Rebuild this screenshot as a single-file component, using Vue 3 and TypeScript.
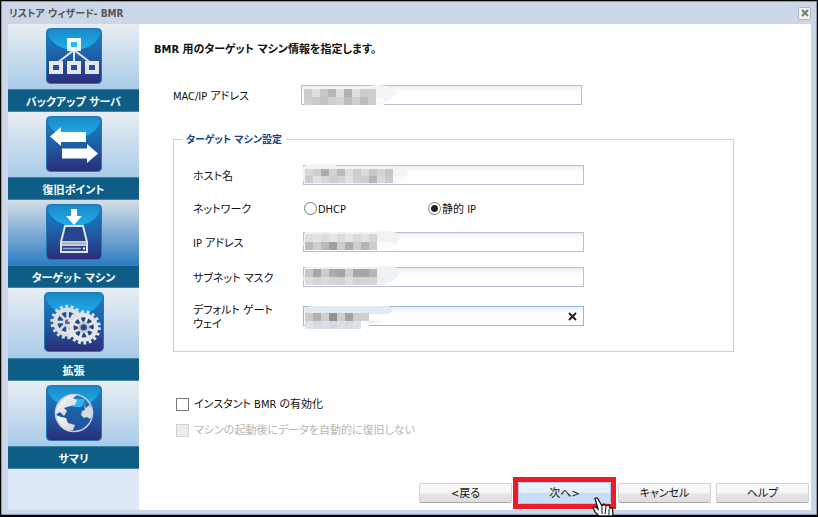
<script setup lang="ts">
import { ref } from 'vue'

type IconName = 'server' | 'arrows' | 'disk' | 'gears' | 'globe'

interface Step {
  label: string
  icon: IconName
  current?: boolean
  large?: boolean
}

interface TextField {
  id: string
  label: string
  mask: string[][]
}

const steps: Step[] = [
  { label: 'バックアップ サーバ', icon: 'server' },
  { label: '復旧ポイント', icon: 'arrows' },
  { label: 'ターゲット マシン', icon: 'disk', current: true },
  { label: '拡張', icon: 'gears', large: true },
  { label: 'サマリ', icon: 'globe' },
]

const macMask = [
  ['#cbcbcb', '#dedede', '#c6c6c6', '#b5b5b5', '#dedfdf', '#b0b0b0', '#dedede', '#cbcbcb', '#cfcfcf', '#f4f4f6'],
  ['#d0d0d0', '#cacaca', '#c4c4c4', '#cfcfcf', '#d4d4d4', '#bcbcbc', '#cecece', '#bcbcbc', '#cecece', '#fafafa'],
]
const hostMask = [
  ['#d5d7d6', '#cecece', '#adadad', '#d2d2d2', '#bababa', '#dcdcdc', '#cbcbcb', '#dadada', '#c8c8c8', '#d4d4d4', '#c5c5c5', '#f3f4f7'],
  ['#cccccc', '#e0e2e1', '#d5d7d7', '#cecece', '#d5d5d5', '#e2e4e4', '#d2d2d2', '#cfcfcf', '#b5b5b5', '#dadada', '#cacaca', '#fafafb'],
]
const fields: TextField[] = [
  {
    id: 'ip',
    label: 'IP アドレス',
    mask: [
      ['#dde0df', '#e2e5e4', '#dbdede', '#e4e6e6', '#d9dcdc', '#e5e5e5', '#d9dada', '#e2e2e2', '#d5d5d5', '#eff2f4', '#f1f4f5'],
      ['#bababa', '#cfcfcf', '#b9b9b9', '#a0a0a0', '#cdcdcd', '#adadad', '#cccccc', '#b5b5b5', '#cccccc', '#fcfcfc', '#fcfcfc'],
    ],
  },
  {
    id: 'subnet',
    label: 'サブネット マスク',
    mask: [
      ['#c8c8c8', '#a8a8a8', '#cdcdcd', '#adadad', '#a4a4a4', '#d0d0d0', '#a8a8a8', '#a6a6a6', '#b6b6b6', '#f3f3f3'],
      ['#dcdcdc', '#d5d5d5', '#dcdcdc', '#d6d6d6', '#d2d2d2', '#dedede', '#d3d3d3', '#d5d5d5', '#d6d6d6', '#eeeeee'],
    ],
  },
]
const gatewayMask = [
  ['#c9cbcc', '#b1b1b1', '#d0d0d0', '#929292', '#cecece', '#a3a3a3', '#cdcdcd', '#cfcfcf'],
  ['#dce2e8', '#d5dde4', '#d8dfe6', '#d2dae2', '#d9e0e6', '#d5dce3', '#dae1e8', '#ffffff'],
]

const spokes = [0, 45, 90, 135]
const network = ref('static')
const instantBmr = ref(false)
</script>

<template>
  <div class="window">
    <header class="titlebar">
      <span>リストア ウィザード- BMR</span>
      <button class="close" type="button" aria-label="閉じる">
        <svg viewBox="0 0 8 8" width="8" height="8"><path d="M1 1l6 6M7 1L1 7" stroke="#777" stroke-width="2" /></svg>
      </button>
    </header>

    <div class="body">
      <nav class="steps">
        <div v-for="step in steps" :key="step.icon" class="step" :class="{ current: step.current, large: step.large }">
          <div class="picture">
            <svg class="icon" viewBox="0 0 56 56">
              <defs>
                <linearGradient :id="step.icon + '-bg'" x1="0" y1="0" x2="0" y2="1">
                  <stop offset="0" stop-color="#1a86c8" />
                  <stop offset="0.5" stop-color="#1c5fa8" />
                  <stop offset="1" stop-color="#2c2d78" />
                </linearGradient>
                <linearGradient :id="step.icon + '-shine'" x1="0" y1="0" x2="0" y2="1">
                  <stop offset="0" stop-color="#1b8bcb" />
                  <stop offset="1" stop-color="#1fb0ea" />
                </linearGradient>
                <linearGradient :id="step.icon + '-metal'" x1="0" y1="0" x2="1" y2="1">
                  <stop offset="0" stop-color="#ffffff" />
                  <stop offset="1" stop-color="#cfcfd3" />
                </linearGradient>
              </defs>
              <rect x="0.5" y="0.5" width="55" height="55" rx="4" :fill="`url(#${step.icon}-bg)`" stroke="#2576b4" />
              <path d="M2 6Q2 2 6 2H50Q54 2 54 6C51 15 41 22 28 22S5 15 2 6Z" :fill="`url(#${step.icon}-shine)`" />

              <g v-if="step.icon === 'server'">
                <path d="M28 22L11 35M28 22V35M28 22L45 35" stroke="#e2e6ee" stroke-width="2" />
                <g fill="#26509a" stroke="#e6e6ea" stroke-width="4">
                  <rect x="23" y="12" width="10" height="9" fill="#25bdf0" stroke="#f2fbff" />
                  <rect x="5" y="35" width="10" height="9" />
                  <rect x="23" y="35" width="10" height="9" />
                  <rect x="41" y="35" width="10" height="9" />
                </g>
              </g>

              <g v-else-if="step.icon === 'arrows'" fill="#fff">
                <path d="M4 20.500L15 11V16H40V26H15V30Z" />
                <path d="M52 37.500L41 28V32.500H16V42.500H41V47Z" />
              </g>

              <g v-else-if="step.icon === 'disk'">
                <path d="M25 5H31V12H36L28 21L20 12H25Z" fill="#fff" />
                <path d="M19 22H37L41 38V48H15V38Z" fill="#264690" stroke="#e2e4ea" stroke-width="2" />
                <path d="M16 37H40V42H16Z" fill="#c9cbd5" />
                <path d="M16 39.500H40" stroke="#9aa2bf" />
                <path d="M17 44.500H35" stroke="#a5aac6" stroke-width="1.500" />
                <path d="M37 44.500H39" stroke="#fff" stroke-width="2" />
              </g>

              <g v-else-if="step.icon === 'gears'">
                <g transform="translate(22 28)" fill="none" stroke="#dcdde1">
                  <circle r="14.500" stroke-width="3" stroke-dasharray="2.6 2.46" />
                  <circle r="11.500" stroke-width="4" fill="#204f99" />
                  <path v-for="angle in spokes" :key="angle" d="M-10 0H10" stroke-width="2.500" :transform="`rotate(${angle})`" />
                  <circle r="3.500" stroke-width="2" fill="#526aa5" />
                </g>
                <g transform="translate(37 33)" fill="none" stroke="#e6e6e8">
                  <circle r="14.500" stroke-width="3" stroke-dasharray="2.6 2.46" />
                  <circle r="11.500" stroke-width="4" fill="#244489" />
                  <path v-for="angle in spokes" :key="angle" d="M-10 0H10" stroke-width="2.500" :transform="`rotate(${angle + 20})`" />
                  <circle r="4" stroke="#c6c8d0" stroke-width="3" fill="#244489" />
                  <circle r="2.500" stroke="#385391" stroke-width="1" />
                </g>
              </g>

              <g v-else>
                <circle cx="28" cy="28" r="18.500" fill="#1d60aa" fill-opacity="0.55" stroke="#c1cad9" stroke-width="1.600" />
                <path d="M30 14H38V18L35 22H27Z" fill="#2cb7f3" />
                <path d="M24 10Q14 13 10 25L9 30L14 27L18 31L21 26L18 23L24 21L29 20L31 15L27 13L31 10Z" :fill="`url(#${step.icon}-metal)`" />
                <path d="M10 30L15 32L20 33L22 38L29 40L27 45L22 46Q12 41 10 30Z" :fill="`url(#${step.icon}-metal)`" />
                <path d="M38 19L40 23L43 20L46 24L47 29L44 34L41 32L38 33L35 30L36 26L39 25Z" fill="#d5d9e2" />
              </g>
            </svg>
          </div>
          <div class="caption">{{ step.label }}</div>
        </div>
      </nav>

      <form class="content" @submit.prevent>
        <h1>BMR 用のターゲット マシン情報を指定します。</h1>

        <div class="row machine">
          <label for="mac">MAC/IP アドレス</label>
          <div class="field">
            <input id="mac" type="text" />
            <svg class="mask" viewBox="0 0 108 24">
              <path d="M1 3Q30 3 64 3Q78 -1 88 3L97 9L88 17L70 21H6Z" fill="#f3f5f8" />
              <g v-for="(tiles, line) in macMask" :key="line">
                <rect v-for="(tone, i) in tiles" :key="i" :x="3 + i * 8" :y="5 + line * 8" width="8" height="8" :fill="tone" />
              </g>
            </svg>
          </div>
        </div>

        <fieldset>
          <legend>ターゲット マシン設定</legend>

          <div class="row">
            <label for="host">ホスト名</label>
            <div class="field">
              <input id="host" type="text" />
              <svg class="mask" viewBox="0 0 108 24">
                <path d="M0 3L6 0H30L34 2H92Q105 5 105 10L96 18L72 20H5L0 17Z" fill="#f1f4f7" />
                <g v-for="(tiles, line) in hostMask" :key="line">
                  <rect v-for="(tone, i) in tiles" :key="i" :x="2 + i * 8" :y="5 + line * 7" width="8" height="7" :fill="tone" />
                </g>
              </svg>
            </div>
          </div>

          <div class="row">
            <span id="network-label" class="name">ネットワーク</span>
            <div class="choices" role="radiogroup" aria-labelledby="network-label">
              <label class="choice"><input v-model="network" type="radio" name="network" value="dhcp" /><span>DHCP</span></label>
              <label class="choice"><input v-model="network" type="radio" name="network" value="static" /><span>静的 IP</span></label>
            </div>
          </div>

          <div v-for="field in fields" :key="field.id" class="row">
            <label :for="field.id">{{ field.label }}</label>
            <div class="field">
              <input :id="field.id" type="text" />
              <svg class="mask" viewBox="0 0 108 24">
                <path d="M2 1H72L82 0L92 1L97 8L90 15L76 19H6L0 14Z" fill="#eff2f5" />
                <g v-for="(tiles, line) in field.mask" :key="line">
                  <rect v-for="(tone, i) in tiles" :key="i" :x="2 + i * 8" :y="3 + line * 8" width="8" height="8" :fill="tone" />
                </g>
              </svg>
            </div>
          </div>

          <div class="row tall">
            <label for="gateway">デフォルト ゲート<br />ウェイ</label>
            <div class="field active">
              <input id="gateway" type="text" />
              <svg class="mask" viewBox="0 0 108 24">
                <path d="M2 4Q4 1 8 1H86L90 4L87 9L84 16L66 18L60 23H8Q3 23 2 19Z" fill="#e1e9f1" />
                <path d="M66 9H90L84 16H66Z" fill="#fff" />
                <g v-for="(tiles, line) in gatewayMask" :key="line">
                  <rect v-for="(tone, i) in tiles" :key="i" :x="2 + i * 8" :y="8 + line * 8" width="8" height="8" :fill="tone" />
                </g>
              </svg>
              <button class="clear" type="button" aria-label="クリア">
                <svg viewBox="0 0 9 9" width="9" height="9"><path d="M1 1l7 7M8 1L1 8" stroke="#222" stroke-width="2" /></svg>
              </button>
            </div>
          </div>
        </fieldset>

        <div class="options">
          <label class="option"><input v-model="instantBmr" type="checkbox" /><span>インスタント BMR の有効化</span></label>
          <label class="option off"><input type="checkbox" disabled /><span>マシンの起動後にデータを自動的に復旧しない</span></label>
        </div>

        <footer class="actions">
          <button type="button">&lt;戻る</button>
          <div class="highlight">
            <button class="next" type="submit">次へ&gt;</button>
            <svg class="pointer" viewBox="0 0 22 19" width="22" height="19">
              <path d="M3 1.500Q4.500 0 6 2L10 9L12 7L14 9L17 8L18 11L20.500 11L21 19H7L3 15L1 10.500Q3 9 5 11L6 12Z" fill="#fff" stroke="#111" stroke-width="1.300" />
              <path d="M10 10V17M14 10L13 17M17 12V18" stroke="#111" />
            </svg>
          </div>
          <button type="button">キャンセル</button>
          <button type="button">ヘルプ</button>
        </footer>
      </form>
    </div>
  </div>
</template>

<style>
body {
  margin: 0;
  background: #000;
}
</style>

<style scoped>
* {
  box-sizing: border-box;
}

.window {
  display: flex;
  flex-direction: column;
  min-height: 100vh;
  padding: 1px 6px 5px 7px;
  border: 1px solid #000;
  border-bottom-width: 2px;
  background: #cbd7e7;
  box-shadow: inset 0 0 0 1px #8798b5;
  color: #111;
  font-family: "DejaVu Sans Condensed", "Noto Sans CJK JP", sans-serif;
  font-size: 11px;
  font-feature-settings: "palt";
  line-height: 14px;
}

button,
input {
  font: inherit;
  font-feature-settings: inherit;
  color: inherit;
}

.titlebar {
  display: flex;
  align-items: center;
  justify-content: space-between;
  height: 22px;
  padding-left: 1px;
  color: #555;
  font-size: 10px;
  font-weight: bold;
}

.titlebar span {
  padding-top: 2px;
}

.close {
  display: flex;
  align-items: center;
  justify-content: center;
  width: 13px;
  height: 13px;
  padding: 0;
  border: 1px solid #b5b5b8;
  border-radius: 2px;
  background: #f1f1f1;
}

.body {
  display: flex;
  flex: 1;
}

.steps {
  flex: 0 0 131px;
  background: #dfe8f6;
}

.picture {
  display: flex;
  justify-content: center;
  height: 65px;
  padding-top: 4px;
  background: linear-gradient(#e9eef3, #a9cbe9);
}

.current .picture {
  background: linear-gradient(#d5dee7, #2d7cc2);
}

.large .picture {
  height: 70px;
}

.icon {
  width: 56px;
  height: 56px;
}

.large .icon {
  width: 60px;
  height: 60px;
}

.caption {
  height: 23px;
  padding-top: 2px;
  border: solid #3f83a6;
  border-width: 1px 0;
  background: #0d5d86;
  color: #fff;
  font-weight: bold;
  line-height: 22px;
  text-align: center;
}

.content {
  display: flex;
  flex: 1;
  flex-direction: column;
  min-width: 0;
  padding: 18px 2px 1px 34px;
  background: #fff;
}

h1 {
  margin: 0 0 27px -19px;
  font-size: 11px;
  line-height: 16px;
}

.row {
  display: flex;
  align-items: center;
}

.row > label,
.name {
  flex: 0 0 110px;
  padding-top: 3px;
}

.machine > label {
  flex-basis: 128px;
}

.field {
  position: relative;
  flex: 0 1 281px;
}

.field input {
  display: block;
  width: 100%;
  height: 20px;
  padding: 0 4px;
  border: 1px solid #b9bfd0;
  border-radius: 0;
  outline: 0;
  background: linear-gradient(#eceeee, #fff 6px);
}

.field.active input {
  padding-right: 22px;
  border-color: #8fb9e3;
}

.mask {
  position: absolute;
  top: -1px;
  left: 0;
  width: 108px;
  height: 24px;
  pointer-events: none;
}

.clear {
  position: absolute;
  top: 0;
  right: 2px;
  display: flex;
  align-items: center;
  justify-content: center;
  width: 20px;
  height: 20px;
  padding: 0;
  border: 0;
  background: none;
}

fieldset {
  display: flex;
  flex-direction: column;
  gap: 15px;
  min-width: 0;
  margin: 26px 75px 44px 0;
  padding: 18px 19px 21px;
  border: 1px solid #ccd0dd;
}

legend {
  height: 16px;
  margin-left: -11px;
  padding: 2px 4px 0;
  color: #15428b;
  font-size: 10px;
  font-weight: bold;
}

.choices {
  display: flex;
}

.choice {
  display: flex;
  align-items: center;
  width: 124px;
  height: 17px;
}

.choice span,
.option span {
  padding-top: 2px;
}

.choice input {
  flex: none;
  width: 13px;
  height: 13px;
  margin: 0 1px;
  border: 1px solid #777;
  border-radius: 50%;
  appearance: none;
  background: #fff;
}

.choice input:checked {
  background: radial-gradient(circle, #222 3px, #fff 4px);
}

.tall {
  height: 28px;
}

.options {
  display: flex;
  flex-direction: column;
  gap: 10px;
  padding-left: 3px;
}

.option {
  display: flex;
  align-items: center;
  gap: 5px;
  height: 16px;
}

.option input {
  flex: none;
  width: 13px;
  height: 13px;
  margin: 0;
  border: 1px solid #777;
  appearance: none;
  background: #fff;
}

.option.off {
  color: #b5b5b5;
}

.option.off input {
  border-color: #d2d2d2;
  background: #ececec;
}

.actions {
  display: flex;
  align-items: center;
  justify-content: flex-end;
  margin-top: auto;
}

.actions button {
  width: 93px;
  height: 20px;
  padding: 2px 0 0;
  border: 1px solid #d2d2d4;
  border-bottom-color: #aaa;
  border-radius: 2px;
  background: linear-gradient(#f8f8f8 45%, #e6e6e8 55%, #dedee0);
}

.actions > button + button {
  margin-left: 5px;
}

.highlight {
  position: relative;
  margin: 0 2px 0 1px;
  border: 5px solid #ed1c24;
}

.highlight .next {
  display: block;
  height: 22px;
  border-color: #a9c5e8;
  background: linear-gradient(#e7f1fc 45%, #c6dcf5 55%, #c9e0fa);
}

.pointer {
  position: absolute;
  top: 15px;
  left: 74px;
  pointer-events: none;
}
</style>
